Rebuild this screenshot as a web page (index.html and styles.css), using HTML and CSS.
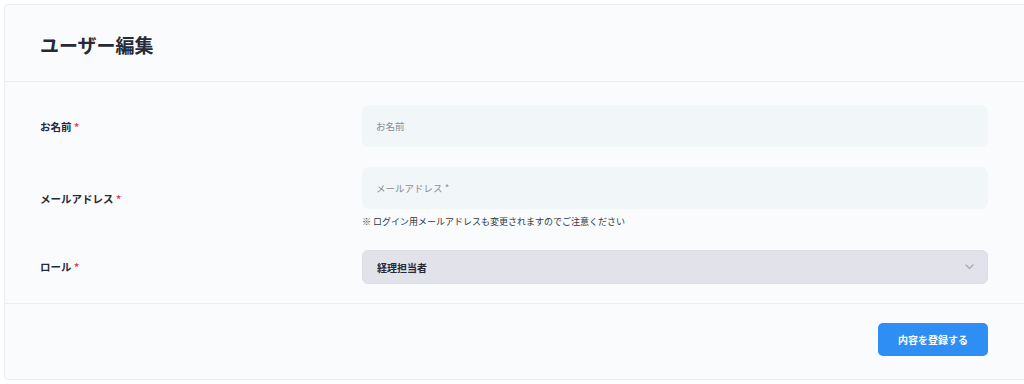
FILE: index.html
```html
<!DOCTYPE html>
<html lang="ja">

<head>
    <meta charset="UTF-8">
    <meta name="viewport" content="width=device-width, initial-scale=1.0">
    <title>ユーザー編集</title>
    <link rel="stylesheet" href="styles.css">
</head>

<body>
    <div class="card">
        <div class="card-header">
            <h1 class="title">ユーザー編集</h1>
        </div>
        <form class="card-body">
            <div class="form-row">
                <label class="form-label" for="name">お名前 <span class="req">*</span></label>
                <div class="form-field">
                    <input class="input" type="text" id="name" placeholder="お名前">
                </div>
            </div>
            <div class="form-row">
                <label class="form-label" for="email">メールアドレス <span class="req">*</span></label>
                <div class="form-field">
                    <input class="input" type="email" id="email" placeholder="メールアドレス *">
                    <p class="note">※ ログイン用メールアドレスも変更されますのでご注意ください</p>
                </div>
            </div>
            <div class="form-row">
                <label class="form-label" for="role">ロール <span class="req">*</span></label>
                <div class="form-field">
                    <div class="select">
                        <span class="select-value">経理担当者</span>
                        <svg class="chevron" width="9" height="6" viewBox="0 0 9 6">
                            <path d="M1 1l3.5 3.5L8 1" fill="none" stroke="#a9abb8" stroke-width="1.4" stroke-linecap="round" stroke-linejoin="round" />
                        </svg>
                    </div>
                </div>
            </div>
        </form>
        <div class="card-footer">
            <a class="btn" href="javascript:;">内容を登録する</a>
        </div>
    </div>
</body>

</html>
```

FILE: styles.css
```css
* {
    padding: 0;
    margin: 0;
    box-sizing: border-box;
}

body {
    padding: 4px 0 0 4px;
    background-color: #fff;
    font-family: "Noto Sans CJK JP", "Noto Sans", sans-serif;
    color: #272a36;
}

.card {
    width: 1030px;
    height: 376px;
    border: 1px solid #eceff2;
    border-radius: 4px;
    background-color: #fafbfd;
}

.card-header {
    height: 77px;
    padding-left: 35px;
    display: flex;
    align-items: center;
    border-bottom: 1px solid #eceff2;
}

.title {
    font-size: 19px;
    font-weight: 700;
    line-height: 1;
    padding-top: 2px;
}

.card-body {
    height: 222px;
    padding: 23px 0 0 35px;
    border-bottom: 1px solid #eceff2;
}

.form-row {
    display: grid;
    grid-template-columns: 322px 626px;
    align-items: center;
    margin-bottom: 20px;
}

.form-row:last-child {
    margin-bottom: 0;
}

.form-label {
    font-size: 10.5px;
    font-weight: 700;
    color: #272a36;
}

.req {
    color: #ee3a62;
}

.input {
    display: block;
    width: 100%;
    height: 42px;
    padding: 0 14px;
    border: none;
    border-radius: 7px;
    outline: none;
    background-color: #f1f6f8;
    font-family: inherit;
    font-size: 9.5px;
    color: #272a36;
}

.input::placeholder {
    color: #868b96;
}

.note {
    margin-top: 6px;
    font-size: 9px;
    line-height: 14px;
    color: #33363f;
}

.select {
    display: flex;
    align-items: center;
    justify-content: space-between;
    height: 34px;
    margin-top: 1px;
    padding: 0 14px;
    border-radius: 6px;
    background-color: #e2e2eb;
    border: 1px solid #dddde6;
}

.select-value {
    font-size: 10px;
    font-weight: 700;
    color: #272a36;
}

.chevron {
    margin-right: -1px;
}

.card-footer {
    display: flex;
    justify-content: flex-start;
    padding: 19px 0 0 873px;
}

.btn {
    display: block;
    width: 110px;
    height: 33px;
    line-height: 33px;
    border-radius: 5px;
    background-color: #2f8ef3;
    text-align: center;
    text-decoration: none;
    font-size: 10px;
    font-weight: 700;
    color: #fff;
}
```
